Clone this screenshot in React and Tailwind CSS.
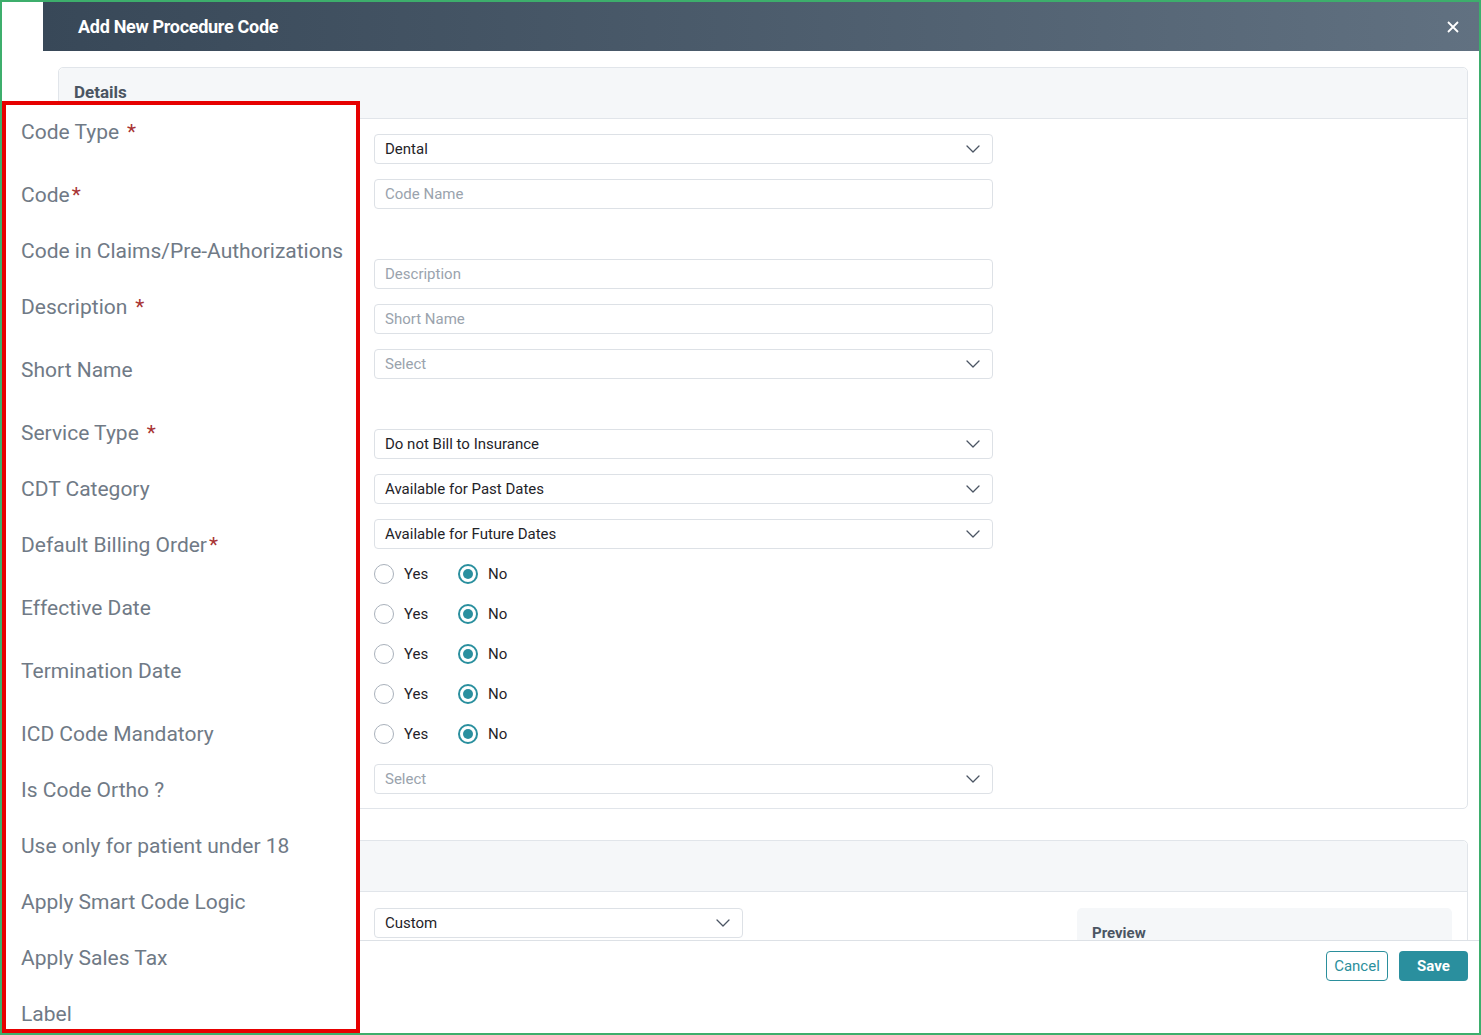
import React from "react";

const font = { fontFamily: "Roboto, 'Noto Sans', Arial, sans-serif" };

const labels = [
  { text: "Code Type", star: "*", gap: true, h: "h-[63px]" },
  { text: "Code", star: "*", h: "h-[56px]" },
  { text: "Code in Claims/Pre-Authorizations", h: "h-[56px]" },
  { text: "Description", star: "*", gap: true, h: "h-[63px]" },
  { text: "Short Name", h: "h-[63px]" },
  { text: "Service Type", star: "*", gap: true, h: "h-[56px]" },
  { text: "CDT Category", h: "h-[56px]" },
  { text: "Default Billing Order", star: "*", h: "h-[63px]" },
  { text: "Effective Date", h: "h-[63px]" },
  { text: "Termination Date", h: "h-[63px]" },
  { text: "ICD Code Mandatory", h: "h-[56px]" },
  { text: "Is Code Ortho ?", h: "h-[56px]" },
  { text: "Use only for patient under 18", h: "h-[56px]" },
  { text: "Apply Smart Code Logic", h: "h-[56px]" },
  { text: "Apply Sales Tax", h: "h-[56px]" },
  { text: "Label", h: "h-[24px]" },
];

const Chevron = () => (
  <svg width="14" height="8" viewBox="0 0 14 8" fill="none">
    <path d="M1 1l6 6 6-6" stroke="#4b5563" strokeWidth="1.3" strokeLinecap="round" strokeLinejoin="round" />
  </svg>
);

const SelectBox = ({ value, placeholder, className = "w-[619px]" }) => (
  <div className={`${className} h-[30px] flex items-center justify-between pl-[10px] pr-[12px] border border-[#dde1e6] rounded-[4px] bg-white text-[15px]`}>
    <span className={value ? "text-[#1f2329]" : "text-[#9aa3ad]"}>{value || placeholder}</span>
    <Chevron />
  </div>
);

const TextBox = ({ placeholder }) => (
  <div className="w-[619px] h-[30px] flex items-center pl-[10px] border border-[#dde1e6] rounded-[4px] bg-white text-[15px] text-[#9aa3ad]">
    {placeholder}
  </div>
);

const RadioRow = ({ className }) => (
  <div className={`flex items-center h-[20px] text-[15px] text-[#1f2329] ${className}`}>
    <div className="w-[84px] flex items-center gap-[10px]">
      <span className="w-[20px] h-[20px] rounded-full border border-[#a9b1bb] bg-white" />
      <span>Yes</span>
    </div>
    <div className="flex items-center gap-[10px]">
      <span className="w-[20px] h-[20px] rounded-full border-2 border-[#2a8f9e] flex items-center justify-center">
        <span className="w-[10px] h-[10px] rounded-full bg-[#2a8f9e]" />
      </span>
      <span>No</span>
    </div>
  </div>
);

export default function App() {
  return (
    <div style={font} className="relative w-[1481px] h-[1035px] border-2 border-[#3dae6c] bg-white overflow-hidden flex">
      <div className="w-[41px] shrink-0 bg-white" />
      <div className="flex-1 flex flex-col h-full">
        {/* header */}
        <div className="h-[49px] shrink-0 flex items-center justify-between pl-[35px] pr-[20px] bg-linear-to-r from-[#384858] to-[#617181]">
          <h3 className="text-white text-[18px] font-bold tracking-[-0.3px]">Add New Procedure Code</h3>
          <svg width="12" height="12" viewBox="0 0 12 12">
            <path d="M1 1l10 10M11 1L1 11" stroke="white" strokeWidth="1.8" />
          </svg>
        </div>

        {/* body */}
        <div className="flex-1 overflow-hidden pt-[16px] pl-[15px] pr-[11px]">
          <div className="border border-[#e1e5ea] rounded-[5px]">
            <div className="h-[51px] bg-[#f5f7f9] border-b border-[#e1e5ea] rounded-t-[5px] flex items-center px-[15px]">
              <span className="text-[17px] font-bold text-[#4a5562]">Details</span>
            </div>
            <div className="pl-[315px] pt-[15px] pb-[14px] flex flex-col">
              <SelectBox value="Dental" />
              <div className="mt-[15px]"><TextBox placeholder="Code Name" /></div>
              <div className="mt-[50px]"><TextBox placeholder="Description" /></div>
              <div className="mt-[15px]"><TextBox placeholder="Short Name" /></div>
              <div className="mt-[15px]"><SelectBox placeholder="Select" /></div>
              <div className="mt-[50px]"><SelectBox value="Do not Bill to Insurance" /></div>
              <div className="mt-[15px]"><SelectBox value="Available for Past Dates" /></div>
              <div className="mt-[15px]"><SelectBox value="Available for Future Dates" /></div>
              <RadioRow className="mt-[15px]" />
              <RadioRow className="mt-[20px]" />
              <RadioRow className="mt-[20px]" />
              <RadioRow className="mt-[20px]" />
              <RadioRow className="mt-[20px]" />
              <div className="mt-[20px]"><SelectBox placeholder="Select" /></div>
            </div>
          </div>

          <div className="mt-[31px] border border-[#e1e5ea] rounded-[5px]">
            <div className="h-[51px] bg-[#f5f7f9] border-b border-[#e1e5ea] rounded-t-[5px]" />
            <div className="pl-[315px] pt-[16px] flex items-start">
              <SelectBox value="Custom" className="w-[369px]" />
              <div className="ml-[334px] w-[375px] h-[200px] bg-[#f5f7f9] rounded-[5px] pl-[15px] pt-[13px]">
                <span className="text-[15px] font-bold text-[#4b5563]">Preview</span>
              </div>
            </div>
          </div>
        </div>

        {/* footer */}
        <div className="h-[93px] shrink-0 border-t border-[#dde1e6] bg-white flex justify-end items-start gap-[11px] pt-[10px] pr-[11px]">
          <button type="button" className="w-[62px] h-[30px] rounded-[4px] border border-[#2b8f9c] text-[#2b8f9c] text-[15px] bg-white">
            Cancel
          </button>
          <button type="button" className="w-[69px] h-[30px] rounded-[4px] bg-[#2a8f9e] text-white text-[15px] font-bold">
            Save
          </button>
        </div>
      </div>

      {/* annotation overlay */}
      <div className="absolute left-0 top-[99px] w-[358px] h-[932px] border-4 border-[#e60000] bg-white pl-[15px] pt-[15px] flex flex-col">
        {labels.map((l) => (
          <div key={l.text} className={`${l.h} shrink-0`}>
            <span className="text-[21px] leading-[24px] text-[#707a86] whitespace-nowrap">
              {l.text}
              {l.star && (
                <span className={`text-[#a83434] ${l.gap ? "ml-[8px]" : "ml-[2px]"}`}>{l.star}</span>
              )}
            </span>
          </div>
        ))}
      </div>
    </div>
  );
}
